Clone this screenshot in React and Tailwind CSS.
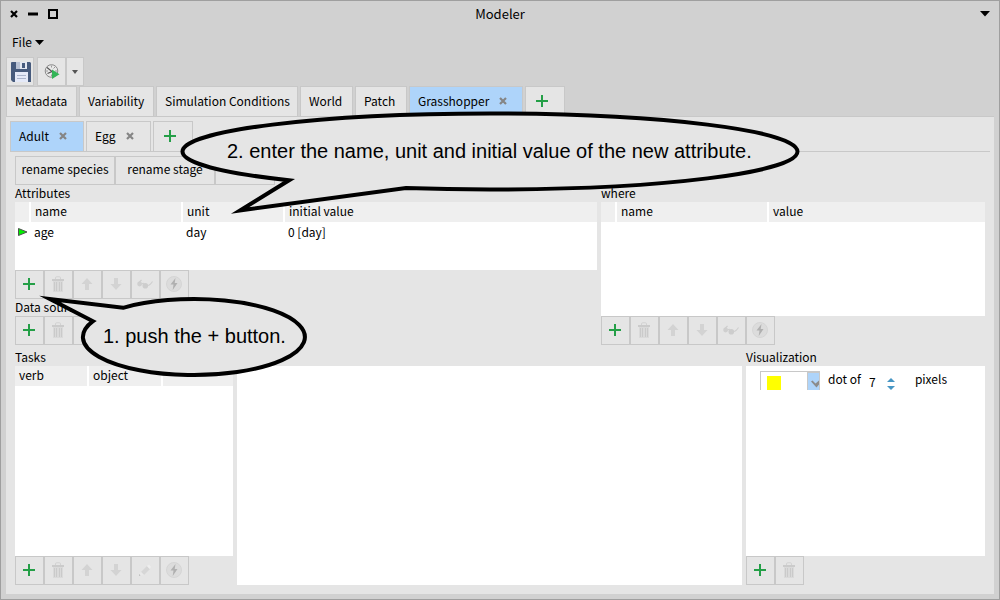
import React from "react";

const tool =
  "flex h-[29px] w-[29px] items-center justify-center border border-[#c8c8c8] pb-px pr-px";

function Plus() {
  return (
    <svg width="12" height="12" viewBox="0 0 12 12">
      <path d="M6 0v12M0 6h12" stroke="#249f47" strokeWidth="2" />
    </svg>
  );
}

function Trash() {
  return (
    <svg width="12" height="16" viewBox="0 0 12 16">
      <path d="M3.500 3V1.800Q3.500 .8 4.500 .8h3q1 0 1 1V3" fill="none" stroke="#d2d2d2" />
      <path d="M0 3h12v2H0z" fill="#cbcbcb" />
      <path d="M1 5h10v11H1z" fill="#dadada" />
      <path d="M2.500 6v9M4.500 6v9M7.500 6v9M9.500 6v9" stroke="#cacaca" />
    </svg>
  );
}

function ArrowUp() {
  return (
    <svg width="12" height="12" viewBox="0 0 12 12">
      <path d="M6 0l5.500 6H8v6H4V6H.5z" fill="#d3d3d3" />
    </svg>
  );
}

function ArrowDown() {
  return (
    <svg width="12" height="12" viewBox="0 0 12 12">
      <path d="M6 12l5.500-6H8V0H4v6H.5z" fill="#d3d3d3" />
    </svg>
  );
}

function Glasses() {
  return (
    <svg width="16" height="10" viewBox="0 0 16 10">
      <circle cx="2.600" cy="5" r="2.400" fill="#cfcfcf" />
      <circle cx="8.300" cy="6.800" r="2.800" fill="#cdcdcd" />
      <path d="M4.500 5Q6.500 3.500 7 5M2 3.500L4.500 1M10.500 6.500Q13 6.500 15.500 2.500" fill="none" stroke="#cecece" strokeWidth="1.200" />
    </svg>
  );
}

function Pencil() {
  return (
    <svg width="14" height="14" viewBox="0 0 14 14">
      <path d="M1 10.500l1.500 2L1 13z" fill="#bdbdbd" />
      <path d="M3 9l6-6 3 3-6 6z" fill="#d6d6d6" />
      <path d="M9 3l2-1.500L13 4l-1.500 2z" fill="#eeeeee" />
      <path d="M1 10.500L3 9l3 3-3 .5z" fill="#e9e9e9" />
    </svg>
  );
}

function Bolt() {
  return (
    <svg width="16" height="16" viewBox="0 0 16 16">
      <circle cx="8" cy="8" r="7.500" fill="#dcdcdc" stroke="#d5d5d5" />
      <path d="M9.500 2L4.500 8.500h3l-.8 5.500L11.500 7H8.700z" fill="#b0b0b0" />
    </svg>
  );
}

function Cross({ className }) {
  return (
    <svg className={className} width="8" height="8" viewBox="0 0 8 8">
      <path d="M1 1l6 6M7 1L1 7" stroke="currentColor" strokeWidth="2.200" />
    </svg>
  );
}

const kinds = {
  Add: Plus,
  Delete: Trash,
  "Move up": ArrowUp,
  "Move down": ArrowDown,
  Inspect: Glasses,
  Edit: Pencil,
  Run: Bolt,
};

function Toolbar({ items }) {
  return (
    <div className="flex">
      {items.map((name) => {
        const Icon = kinds[name];
        return (
          <button key={name} aria-label={name} disabled={name !== "Add"} className={tool}>
            <Icon />
          </button>
        );
      })}
    </div>
  );
}

function Tab({ label, selected, closable, width }) {
  return (
    <div
      className={
        "flex h-[30px] items-center whitespace-nowrap border border-b-0 border-[#c8c8c8] pb-[2px] pl-2 " +
        (selected ? "bg-[#aed4fa] " : "bg-[#e5e5e5] ") +
        width
      }
    >
      <button role="tab" aria-selected={!!selected}>{label}</button>
      {closable && (
        <button aria-label={"Close " + label} className="ml-[10px] text-[#858585]">
          <Cross />
        </button>
      )}
    </div>
  );
}

function AddTab() {
  return (
    <button
      aria-label="Add tab"
      className="flex h-[30px] w-10 items-center justify-center border border-b-0 border-[#c8c8c8] bg-[#e5e5e5] pb-px pr-[6px]"
    >
      <Plus />
    </button>
  );
}

function Grid({ columns, rows = [], label }) {
  return (
    <table aria-label={label} className="w-full table-fixed border-separate border-spacing-0 text-left">
      <colgroup>
        {columns.map((c, i) => (
          <col key={i} className={c.width} />
        ))}
      </colgroup>
      <thead>
        <tr className="h-5 bg-[#efefef]">
          {columns.map((c, i) => (
            <th
              key={i}
              className={
                "p-0 pb-[2px] pl-1 font-normal " +
                (i < columns.length - 1 ? "border-r-2 border-white" : "")
              }
            >
              {c.name}
            </th>
          ))}
        </tr>
      </thead>
      <tbody>
        {rows.map((r, i) => (
          <tr key={i} className="h-[22px]">
            {r.map((cell, j) => (
              <td key={j} className="p-0 pb-[2px] pl-[3px]">{cell}</td>
            ))}
          </tr>
        ))}
      </tbody>
    </table>
  );
}

function Flag() {
  return (
    <svg width="10" height="9" viewBox="0 0 10 9">
      <path d="M.5 .5L9 4 .5 7.500z" fill="#00f000" stroke="#505050" />
    </svg>
  );
}

function SaveIcon() {
  return (
    <svg width="22" height="22" viewBox="0 0 22 22">
      <path d="M1 2q0-1 1-1h18l1 1v19H3l-2-2z" fill="#475b7d" />
      <path d="M6 1h11v7H6z" fill="#e3e7f0" />
      <path d="M6 1h4v7H6z" fill="#b9c2d4" />
      <path d="M12 2h3v5h-3z" fill="#475b7d" />
      <path d="M5 11h13v10H5z" fill="#e4e9f8" />
      <path d="M7 14.500h9M7 17.500h9" stroke="#aab4cc" />
    </svg>
  );
}

function RunIcon() {
  return (
    <svg width="16" height="16" viewBox="0 0 16 16">
      <circle cx="7.500" cy="7" r="6.300" fill="#e9e9e9" stroke="#8a8a8a" />
      <path d="M3 3.500L8 7.500 3.500 9.500" fill="none" stroke="#555555" strokeWidth="1.200" />
      <path d="M7.500 1.500v2M13 7h-2M7.500 12.500v-2M2 7h2M11 3L9.500 4.500" stroke="#999999" />
      <path d="M8 5.500l7.500 4.700L8 15z" fill="#33b457" />
    </svg>
  );
}

function Down() {
  return (
    <svg width="10" height="6" viewBox="0 0 10 6">
      <path d="M0 0h10L5 5.500z" fill="currentColor" />
    </svg>
  );
}

const sixTools = ["Add", "Delete", "Move up", "Move down", "Inspect", "Run"];
const taskTools = ["Add", "Delete", "Move up", "Move down", "Edit", "Run"];

export default function App() {
  return (
    <div className="relative flex min-h-screen flex-col border border-[#9f9f9f] bg-[#d1d1d1] px-[5px] pb-[5px] font-['Noto_Sans_CJK_JP','Noto_Sans',sans-serif] text-[12px] leading-4 text-black">
      <header className="flex h-[26px] items-center pl-1 pr-1">
        <div className="flex flex-1 items-center gap-[10px]">
          <button aria-label="Close window"><Cross /></button>
          <button aria-label="Minimize">
            <svg width="10" height="10" viewBox="0 0 10 10"><path d="M0 5h10" stroke="black" strokeWidth="3" /></svg>
          </button>
          <button aria-label="Maximize">
            <svg width="10" height="10" viewBox="0 0 10 10"><path d="M1 1h8v8H1z" fill="none" stroke="black" strokeWidth="2" /></svg>
          </button>
        </div>
        <h1 className="text-[13px]">Modeler</h1>
        <div className="flex flex-1 justify-end">
          <button aria-label="Window menu"><Down /></button>
        </div>
      </header>

      <nav className="flex h-[30px] items-center pl-[6px]">
        <button className="flex items-center gap-[3px]">
          File
          <svg width="9" height="5" viewBox="0 0 9 5"><path d="M0 0h9L4.500 5z" fill="currentColor" /></svg>
        </button>
      </nav>

      <div className="flex">
        <button aria-label="Save" className="mr-[3px] flex h-[29px] w-7 items-center justify-end border border-[#c8c8c8] bg-[#e5e5e5] pr-px"><SaveIcon /></button>
        <button aria-label="Run simulation" className="flex h-[29px] w-[29px] items-center justify-center border border-[#c8c8c8] bg-[#e5e5e5]"><RunIcon /></button>
        <button aria-label="Run options" className="flex h-[29px] w-[18px] items-center justify-center border border-[#c8c8c8] bg-[#e5e5e5] text-[#555555]">
          <svg width="6" height="4" viewBox="0 0 6 4"><path d="M0 0h6L3 4z" fill="currentColor" /></svg>
        </button>
      </div>

      <div role="tablist" className="flex gap-[2px]">
        <Tab label="Metadata" width="w-[71px]" />
        <Tab label="Variability" width="w-[75px]" />
        <Tab label="Simulation Conditions" width="w-[142px]" />
        <Tab label="World" width="w-[53px]" />
        <Tab label="Patch" width="w-[52px]" />
        <Tab label="Grasshopper" selected closable width="w-[114px]" />
        <AddTab />
      </div>

      <main className="flex flex-1 flex-col border-t border-[#c8c8c8] bg-[#e5e5e5] px-1 pb-[9px] pt-1">
        <div role="tablist" className="flex gap-[2px] border-b border-[#c8c8c8]">
          <Tab label="Adult" selected closable width="w-[74px]" />
          <Tab label="Egg" closable width="w-[65px]" />
          <AddTab />
        </div>

        <div className="flex flex-1 flex-col px-[5px] pt-1">
          <div className="flex">
            <button className="h-[29px] w-[100px] border border-[#c8c8c8] pb-[3px]">rename species</button>
            <button className="h-[29px] w-[100px] border border-[#c8c8c8] pb-[3px]">rename stage</button>
            <button aria-label="More actions" className="h-[29px] w-[60px] border border-[#c8c8c8]" />
          </div>

          <div className="grid grid-cols-[minmax(0,582fr)_minmax(0,384fr)] gap-1">
            <div>
              <h2 className="h-[17px]">Attributes</h2>
              <div className="h-[68px] bg-white">
                <Grid
                  label="Attributes"
                  columns={[
                    { name: "", width: "w-4" },
                    { name: "name", width: "w-[152px]" },
                    { name: "unit", width: "w-[102px]" },
                    { name: "initial value", width: "" },
                  ]}
                  rows={[[<Flag />, "age", "day", "0 [day]"]]}
                />
              </div>
              <Toolbar items={sixTools} />
              <h2 className="h-[17px]">Data sources</h2>
              <Toolbar items={["Add", "Delete", "Edit"]} />
            </div>
            <div className="flex flex-col">
              <h2 className="h-[17px]">where</h2>
              <div className="flex-1 bg-white">
                <Grid
                  label="where"
                  columns={[
                    { name: "", width: "w-4" },
                    { name: "name", width: "w-[152px]" },
                    { name: "value", width: "" },
                  ]}
                />
              </div>
              <Toolbar items={sixTools} />
            </div>
          </div>

          <div className="grid flex-1 grid-cols-[minmax(0,218fr)_minmax(0,505fr)_minmax(0,239fr)] gap-1 pt-1">
            <div className="flex flex-col">
              <h2 className="h-[17px]">Tasks</h2>
              <div className="flex-1 bg-white">
                <Grid
                  label="Tasks"
                  columns={[
                    { name: "verb", width: "w-[74px]" },
                    { name: "object", width: "w-[74px]" },
                    { name: "", width: "" },
                  ]}
                />
              </div>
              <Toolbar items={taskTools} />
            </div>
            <div className="flex flex-col pt-[17px]">
              <div className="flex-1 bg-white" />
            </div>
            <div className="flex flex-col">
              <h2 className="h-[17px]">Visualization</h2>
              <div className="flex-1 bg-white pl-[14px] pt-[5px]">
                <div className="flex h-[19px] items-start">
                  <div className="relative h-[19px] w-[60px]">
                    <select aria-label="Dot color" className="h-[19px] w-full appearance-none border-l border-t border-[#c8c8c8] bg-white text-transparent">
                      <option value="yellow"></option>
                    </select>
                    <span className="pointer-events-none absolute bottom-0 left-[7px] h-[14px] w-[14px] bg-[#ffff00]" />
                    <span className="pointer-events-none absolute bottom-0 right-0 flex h-[18px] w-[13px] items-center justify-end border border-b-0 border-[#c8c8c8] bg-[#aed4fa] pt-1">
                      <svg width="8" height="8" viewBox="0 0 8 8"><path d="M0 1.500L1.500 .5 4.500 3.500 8 .5v4L5.500 7.500z" fill="#8c8c8c" /></svg>
                    </span>
                  </div>
                  <label htmlFor="dot" className="pl-2">dot of</label>
                  <input id="dot" defaultValue="7" className="ml-2 mt-[3px] h-4 w-[18px] bg-transparent p-0 leading-4 outline-none" />
                  <div className="mt-[7px] flex flex-col gap-1">
                    <button aria-label="Increase"><svg className="block" width="8" height="4" viewBox="0 0 8 4"><path d="M4 0l4 4H0z" fill="#4796c4" /></svg></button>
                    <button aria-label="Decrease"><svg className="block" width="8" height="4" viewBox="0 0 8 4"><path d="M4 4l4-4H0z" fill="#4796c4" /></svg></button>
                  </div>
                  <span className="pl-5">pixels</span>
                </div>
              </div>
              <Toolbar items={["Add", "Delete"]} />
            </div>
          </div>
        </div>
      </main>

      <div className="absolute left-[179px] top-[109px] h-[110px] w-[622px]">
        <svg className="absolute inset-0" width="622" height="110" viewBox="180 110 622 110">
          <path d="M289 180.260A307.500 38 0 0 1 182.500 151.500A307.500 38 0 0 1 490 113.500A307.500 38 0 0 1 797.500 151.500A307.500 38 0 0 1 490 189.500A307.500 38 0 0 1 406 188.050L240 210.500Z" fill="#e5e5e5" stroke="black" strokeWidth="4" strokeMiterlimit="12" />
        </svg>
        <p className="relative whitespace-nowrap pl-[47px] pt-[29px] font-['Liberation_Sans',sans-serif] text-[20px] leading-6">
          2. enter the name, unit and initial value of the new attribute.
        </p>
      </div>

      <div className="absolute left-[34px] top-[289px] h-[90px] w-[275px]">
        <svg className="absolute inset-0" width="275" height="90" viewBox="35 290 275 90">
          <path d="M93 321.200A111 38 0 1 0 123 307.800L50 299Z" fill="#e5e5e5" stroke="black" strokeWidth="4" strokeMiterlimit="12" />
        </svg>
        <p className="relative whitespace-nowrap pl-[68px] pt-[34px] font-['Liberation_Sans',sans-serif] text-[20px] leading-6">
          1. push the + button.
        </p>
      </div>
    </div>
  );
}
